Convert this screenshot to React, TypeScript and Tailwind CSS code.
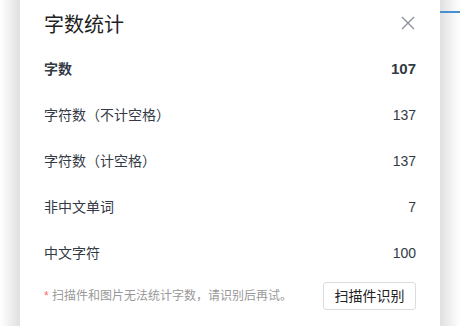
import React from "react";

const rows: { label: string; value: string; bold?: boolean }[] = [
  { label: "字数", value: "107", bold: true },
  { label: "字符数（不计空格）", value: "137" },
  { label: "字符数（计空格）", value: "137" },
  { label: "非中文单词", value: "7" },
  { label: "中文字符", value: "100" },
];

export default function App() {
  return (
    <div
      className="flex w-[460px] h-[326px] bg-white overflow-hidden"
      style={{ fontFamily: '"Liberation Sans", "Noto Sans CJK SC", sans-serif' }}
    >
      <div className="w-[20px] h-full bg-gradient-to-r from-white to-[#e0e0e0]" />
      <div className="w-[420px] h-full bg-white px-6 flex flex-col">
        <div className="flex items-start justify-between pt-[12px] h-[46px]">
          <div className="text-[20px] leading-[26px] text-[#1f1f1f]">字数统计</div>
          <svg width="14" height="14" viewBox="0 0 14 14" className="mt-[4px] mr-[1px]">
            <path d="M1 1L13 13M13 1L1 13" stroke="#8a8f9c" strokeWidth="1.3" fill="none" />
          </svg>
        </div>
        {rows.map((r) => (
          <div key={r.label} className="flex items-center justify-between h-[46px] text-[14px] text-[#333a45]">
            <span className={r.bold ? "font-bold" : ""}>{r.label}</span>
            <span className={r.bold ? "font-bold text-[15px]" : ""}>{r.value}</span>
          </div>
        ))}
        <div className="flex items-center justify-between mt-[6px]">
          <div className="text-[12px] text-[#999]">
            <span className="text-[#f56c6c]">*</span> 扫描件和图片无法统计字数，请识别后再试。
          </div>
          <button className="h-[28px] w-[93px] border border-[#dcdcdc] rounded-[3px] text-[14px] text-[#222] bg-white">
            扫描件识别
          </button>
        </div>
      </div>
      <div className="relative w-[20px] h-full bg-gradient-to-r from-[#e0e0e0] to-white">
        <div className="absolute left-0 right-0 top-[11px] h-[2px] bg-[#4a90d0]" />
      </div>
    </div>
  );
}
